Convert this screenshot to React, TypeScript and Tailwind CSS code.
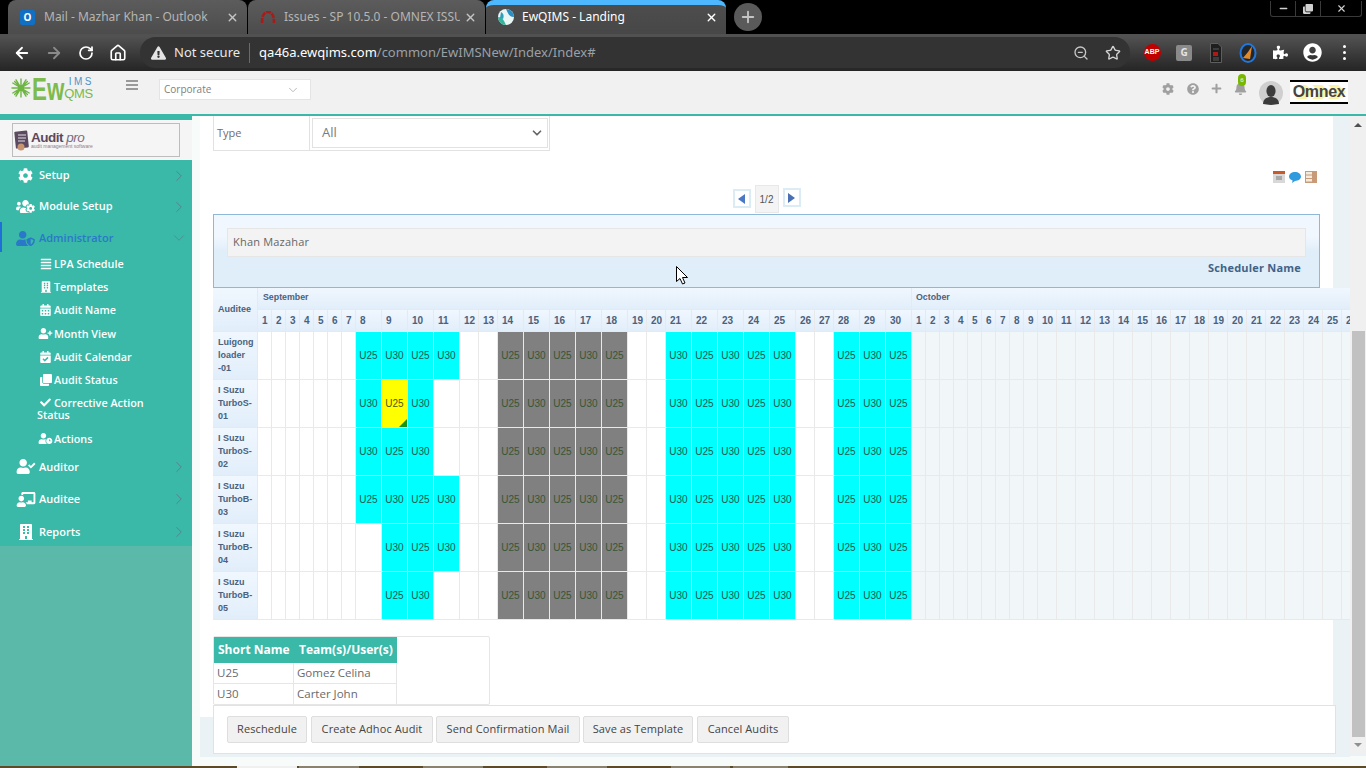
import type { ReactNode } from "react";
import { ArrowLeft, ArrowRight, ChevronDown, ChevronRight, Home, Minus, Plus, RotateCw, Star, X, ZoomOut } from "lucide-react";
import {
  FaAlignJustify,
  FaBell,
  FaBuilding,
  FaCalendarAlt,
  FaCalendarCheck,
  FaChalkboardTeacher,
  FaCheck,
  FaClone,
  FaCog,
  FaExclamationTriangle,
  FaPlus,
  FaPuzzlePiece,
  FaQuestionCircle,
  FaUserCheck,
  FaUserCircle,
  FaUserClock,
  FaUserPlus,
  FaUserShield,
  FaUsersCog,
} from "react-icons/fa";

const september = Array.from({ length: 30 }, (_, i) => i + 1);
const october = Array.from({ length: 26 }, (_, i) => i + 1);

const auditees = [
  { name: "Luigong loader -01", early: { 8: "U25", 9: "U30", 10: "U25", 11: "U30" } },
  { name: "I Suzu TurboS-01", early: { 8: "U30", 9: "U25", 10: "U30" } },
  { name: "I Suzu TurboS-02", early: { 8: "U30", 9: "U25", 10: "U30" } },
  { name: "I Suzu TurboB-03", early: { 8: "U25", 9: "U30", 10: "U25", 11: "U30" } },
  { name: "I Suzu TurboB-04", early: { 9: "U30", 10: "U25", 11: "U30" } },
  { name: "I Suzu TurboB-05", early: { 9: "U25", 10: "U30" } },
] as { name: string; early: Record<number, string> }[];

const grey: Record<number, string> = { 14: "U25", 15: "U30", 16: "U25", 17: "U30", 18: "U25" };
const cyan: Record<number, string> = {
  21: "U30",
  22: "U25",
  23: "U30",
  24: "U25",
  25: "U30",
  28: "U25",
  29: "U30",
  30: "U25",
};

function Tab({ icon, title, active, width }: { icon: ReactNode; title: string; active?: boolean; width: string }) {
  return (
    <div
      className={`flex h-[34px] items-center rounded-t-lg pl-[12px] pr-[8px] ${width} ${
        active
          ? "border-t-[5px] border-[#4db8ff] bg-linear-to-b from-[#4d4d4d] to-[#474747] pb-[5px] text-white"
          : "bg-linear-to-b from-[#5c5c5c] to-[#4c4c4c] text-[#b5b5b5]"
      }`}
    >
      <span className="flex w-[24px] shrink-0 items-center">{icon}</span>
      <span className="min-w-0 flex-1 overflow-hidden whitespace-nowrap text-[12px]">{title}</span>
      <X className={`ml-1 h-[13px] w-[13px] shrink-0 ${active ? "text-white" : "text-[#c4c4c4]"}`} strokeWidth={2.5} />
    </div>
  );
}

function BrowserChrome() {
  return (
    <div className="font-['Noto_Sans',sans-serif]">
      <div className="flex h-[34px] bg-black pl-[8px]">
        <Tab
          width="w-[239px]"
          title="Mail - Mazhar Khan - Outlook"
          icon={
            <span className="flex h-[15px] w-[15px] items-center justify-center rounded-[2px] bg-[#1170c4] text-[10px] font-bold leading-none text-white">
              O
            </span>
          }
        />
        <div className="w-px" />
        <Tab
          width="w-[237px]"
          title="Issues - SP 10.5.0 - OMNEX ISSUE"
          icon={
            <svg viewBox="0 0 16 12" className="h-[12px] w-[16px]">
              <path d="M2 12 C2 3 5 1 8 1 C11 1 14 3 14 12" fill="none" stroke="#a81b1b" strokeWidth="2.6" strokeDasharray="5 1" />
            </svg>
          }
        />
        <div className="w-px" />
        <Tab
          active
          width="w-[240px]"
          title="EwQIMS - Landing"
          icon={
            <svg viewBox="0 0 16 16" className="h-[16px] w-[16px]">
              <circle cx="8" cy="8" r="8" fill="#e8f6f4" />
              <path d="M8 0 A8 8 0 0 1 16 8 C11 8 10 4 8 0Z" fill="#2a8fc4" />
              <path d="M0 8 C5 8 6 12 8 16 A8 8 0 0 1 0 8Z" fill="#33b59a" />
              <path d="M3 3 C6 5 6 7 5 10 L2 9 Z" fill="#2f9ebd" />
            </svg>
          }
        />
        <div className="ml-[8px] mt-[3px] flex h-[28px] w-[28px] items-center justify-center rounded-full bg-[#5a5a5a]">
          <Plus className="h-[18px] w-[18px] text-[#c4c4c4]" strokeWidth={2.5} />
        </div>
        <div className="ml-auto mr-[4px] mt-px flex h-[16px] w-[92px] rounded-b-[3px] border border-t-0 border-[#3a3a3a] text-[#d0d0d0]">
          <div className="flex w-[25px] items-center justify-center border-r border-[#3a3a3a]">
            <Minus className="h-[11px] w-[11px]" strokeWidth={3} />
          </div>
          <div className="flex w-[25px] items-center justify-center border-r border-[#3a3a3a]">
            <FaClone className="h-[10px] w-[10px]" />
          </div>
          <div className="flex flex-1 items-center justify-center">
            <X className="h-[11px] w-[11px]" strokeWidth={2.5} />
          </div>
        </div>
      </div>
      <div className="flex h-[37px] items-center bg-linear-to-b from-[#515151] from-[8%] to-[#252525] pl-[6px]">
        <div className="flex w-[32px] justify-center">
          <ArrowLeft className="h-[18px] w-[18px] text-white" strokeWidth={2.4} />
        </div>
        <div className="flex w-[32px] justify-center">
          <ArrowRight className="h-[18px] w-[18px] text-[#8a8a8a]" strokeWidth={2.4} />
        </div>
        <div className="flex w-[32px] justify-center">
          <RotateCw className="h-[16px] w-[16px] text-white" strokeWidth={2.6} />
        </div>
        <div className="flex w-[32px] justify-center">
          <Home className="h-[18px] w-[18px] text-white" strokeWidth={2.2} />
        </div>
        <div className="ml-[6px] flex h-[31px] w-[990px] items-center rounded-full bg-[#333333] pl-[11px] pr-[9px]">
          <FaExclamationTriangle className="h-[14px] w-[15px] text-[#e4e4e4]" />
          <span className="ml-[8px] whitespace-nowrap text-[13px] text-[#e8e8e8]">Not secure</span>
          <span className="ml-[9px] h-[20px] w-px bg-[#6a6a6a]" />
          <span className="ml-[9px] whitespace-nowrap text-[13px] text-[#9aa0a6]">
            <span className="text-white">qa46a.ewqims.com</span>/common/EwIMSNew/Index/Index#
          </span>
          <ZoomOut className="ml-auto h-[16px] w-[16px] text-[#c8c8c8]" />
          <Star className="ml-[16px] h-[16px] w-[16px] text-[#d4d4d4]" strokeWidth={2} />
        </div>
        <div className="ml-[6px] flex w-[32px] justify-center">
          <span className="flex h-[17px] w-[17px] items-center justify-center rounded-full bg-[#c00000] font-['Liberation_Sans',sans-serif] text-[7px] font-bold text-white">
            ABP
          </span>
        </div>
        <div className="flex w-[32px] justify-center">
          <span className="flex h-[16px] w-[16px] items-center justify-center rounded-[2px] bg-[#8a8a8a] text-[10px] font-bold text-[#e5e5e5]">
            G
          </span>
        </div>
        <div className="flex w-[32px] justify-center">
          <svg viewBox="0 0 12 20" className="h-[20px] w-[12px]">
            <path d="M0.5 0.5H8L11.5 4V19.5H0.5Z" fill="#1e1e1e" stroke="#5e5e5e" />
            <rect x="3" y="9" width="5" height="4" fill="#b01818" />
            <path d="M3 6H9M3 15H9M3 17H9" stroke="#5a5a5a" />
          </svg>
        </div>
        <div className="flex w-[32px] justify-center">
          <svg viewBox="0 0 18 20" className="h-[20px] w-[18px]">
            <ellipse cx="9" cy="10" rx="7.5" ry="9" fill="#24262b" stroke="#2277dd" strokeWidth="2" />
            <path d="M13 3 L9 9 L4 15 L11 16 Z" fill="#e08a2c" />
          </svg>
        </div>
        <div className="flex w-[32px] justify-center">
          <FaPuzzlePiece className="h-[15px] w-[15px] text-white" />
        </div>
        <div className="flex w-[32px] justify-center">
          <FaUserCircle className="h-[19px] w-[19px] text-white" />
        </div>
        <div className="flex w-[32px] flex-col items-center gap-[3px]">
          <span className="h-[3px] w-[3px] rounded-full bg-white" />
          <span className="h-[3px] w-[3px] rounded-full bg-white" />
          <span className="h-[3px] w-[3px] rounded-full bg-white" />
        </div>
      </div>
    </div>
  );
}

function AppHeader() {
  return (
    <div className="flex h-[45px] items-center border-b-2 border-[#3ab8a8] bg-[#f1f1f1]">
      <svg viewBox="0 0 20 20" className="mb-[9px] ml-[11px] h-[20px] w-[20px]">
        <g stroke="#6fb544" strokeLinecap="round">
          <path d="M10 1V19M1 10H19M3.6 3.6L16.4 16.4M16.4 3.6L3.6 16.4M5 1.8L15 18.2M15 1.8L5 18.2M1.8 5L18.2 15M1.8 15L18.2 5" strokeWidth="1.4" />
        </g>
        <circle cx="10" cy="10" r="3" fill="#6fb544" />
      </svg>
      <span className="mb-[7px] ml-px w-[33px] origin-left scale-x-[0.72] font-['Liberation_Sans',sans-serif] text-[31px] font-bold leading-none text-[#7dbb4c]">
        Ew
      </span>
      <span className="mb-[8px] flex w-[28px] flex-col items-end font-['Liberation_Sans',sans-serif] leading-none">
        <span className="mr-[-1px] text-[10px] tracking-[2.5px] text-[#4c95c9]">IMS</span>
        <span className="text-[13px] tracking-[-0.3px] text-[#79b94a]">QMS</span>
      </span>
      <div className="mb-[15px] ml-[33px] flex w-[12px] flex-col gap-[2px]">
        <span className="h-[2px] bg-[#999999]" />
        <span className="h-[2px] bg-[#999999]" />
        <span className="h-[2px] bg-[#999999]" />
      </div>
      <div className="ml-[21px] mt-[-6px] flex h-[21px] w-[152px] items-center border border-[#e4e4e4] bg-white pl-[4px] pr-[10px] font-['Open_Sans',sans-serif] text-[10px] text-[#808080]">
        Corporate
        <ChevronDown className="ml-auto h-[14px] w-[14px] text-[#b0b0b0]" strokeWidth={1.5} />
      </div>
      <div className="ml-auto flex items-center text-[#a0a0a0]">
        <FaCog className="mb-[8px] h-[12px] w-[12px]" />
        <FaQuestionCircle className="mb-[8px] ml-[13px] h-[12px] w-[12px]" />
        <FaPlus className="mb-[8px] ml-[12px] h-[11px] w-[11px]" />
        <span className="relative mb-[8px] ml-[12px] block">
          <FaBell className="h-[13px] w-[13px]" />
          <span className="absolute left-[4px] top-[-8px] flex h-[12px] w-[8px] items-center justify-center rounded-full bg-[#7ab800] text-[6px] leading-none text-white">
            6
          </span>
        </span>
        <svg viewBox="0 0 24 24" className="ml-[12px] h-[24px] w-[24px]">
          <ellipse cx="12" cy="12" rx="12" ry="12" fill="#cfcfcf" />
          <ellipse cx="12" cy="10" rx="4.6" ry="6" fill="#3b3b3b" />
          <path d="M4 23 C4 17 9 16 12 16 C15 16 20 17 20 23 L12 24Z" fill="#3b3b3b" />
        </svg>
        <div className="relative mb-[2px] ml-[7px] mr-[18px] flex h-[24px] w-[58px] flex-col justify-between bg-white">
          <svg viewBox="0 0 58 24" className="absolute inset-0 h-[24px] w-[58px]">
            <path d="M6 5L14 12L6 19H16L24 12L16 5ZM22 5L30 12L22 19H32L40 12L32 5ZM38 5L46 12L38 19H48L56 12L48 5Z" fill="#fbf3a8" />
          </svg>
          <span className="relative h-[2px] bg-black" />
          <span className="relative text-center font-['Liberation_Sans',sans-serif] text-[16px] font-bold leading-none tracking-[-0.3px] text-[#444444]">
            Omnex
          </span>
          <span className="relative h-[2px] bg-black" />
        </div>
      </div>
    </div>
  );
}

function TopItem({ icon, label, open, blue, className }: { icon: ReactNode; label: string; open?: boolean; blue?: boolean; className: string }) {
  return (
    <div className={`flex items-center pr-[4px] ${blue ? "border-l-2 border-[#1f6fd6] text-[#2a78c8]" : "pl-[2px] text-white"} ${className}`}>
      <span className="flex w-[37px] shrink-0 justify-center pl-[10px]">{icon}</span>
      <span className="text-[11px] font-semibold">{label}</span>
      {open ? (
        <ChevronDown className="ml-auto h-[18px] w-[18px] text-[#4f8c96]" strokeWidth={1.2} />
      ) : (
        <ChevronRight className="ml-auto h-[18px] w-[18px] text-[#5a7f8f]" strokeWidth={1.2} />
      )}
    </div>
  );
}

function SubItem({ icon, label, className }: { icon: ReactNode; label: string; className: string }) {
  return (
    <div className={`pl-[37px] pr-[20px] text-[10.8px] font-semibold leading-[12px] text-white ${className}`}>
      <span className="inline-flex w-[17px] justify-center align-[-1px]">{icon}</span>
      {label}
    </div>
  );
}

function Sidebar() {
  return (
    <aside className="flex w-[192px] shrink-0 flex-col bg-[#5bb9a9] font-['Open_Sans',sans-serif]">
      <div className="bg-[#3ab8a8]">
        <div className="mt-[4px] h-[40px] bg-[#f5f5f5] pl-[12px] pr-[12px] pt-[3px]">
          <div className="flex h-[34px] items-center border border-[#bdbdbd] pl-px">
            <svg viewBox="0 0 16 22" className="h-[22px] w-[16px]">
              <rect x="1" y="2" width="13" height="17" rx="1" fill="#5b4a60" transform="rotate(-6 8 10)" />
              <path d="M4 6H12M4 9H12M4 12H11" stroke="#e5e0e5" strokeWidth="1" />
              <circle cx="7" cy="18" r="3.5" fill="#c7956f" />
            </svg>
            <div className="ml-px flex flex-col font-['Liberation_Sans',sans-serif] leading-none text-[#5a4860]">
              <span className="text-[13.5px] font-bold tracking-[-0.5px]">
                Audit <span className="font-normal italic text-[#7b6b80]">pro</span>
              </span>
              <span className="text-[5px] text-[#8a8090]">audit management software</span>
            </div>
          </div>
        </div>
        <TopItem className="h-[31px]" icon={<FaCog className="h-[15px] w-[15px]" />} label="Setup" />
        <TopItem className="h-[31px]" icon={<FaUsersCog className="h-[15px] w-[21px]" />} label="Module Setup" />
        <TopItem blue open className="h-[30px] pt-[2px]" icon={<FaUserShield className="h-[15px] w-[19px]" />} label="Administrator" />
        <SubItem className="flex h-[23.3px] items-center" icon={<FaAlignJustify className="h-[12px] w-[12px]" />} label="LPA Schedule" />
        <SubItem className="flex h-[23.3px] items-center" icon={<FaBuilding className="h-[12px] w-[10px]" />} label="Templates" />
        <SubItem className="flex h-[23.3px] items-center" icon={<FaCalendarAlt className="h-[12px] w-[11px]" />} label="Audit Name" />
        <SubItem className="flex h-[23.3px] items-center" icon={<FaUserPlus className="h-[11px] w-[15px]" />} label="Month View" />
        <SubItem className="flex h-[23.3px] items-center" icon={<FaCalendarCheck className="h-[12px] w-[11px]" />} label="Audit Calendar" />
        <SubItem className="flex h-[23.3px] items-center" icon={<FaClone className="h-[12px] w-[12px]" />} label="Audit Status" />
        <SubItem className="h-[35px] pt-[5px]" icon={<FaCheck className="h-[11px] w-[13px]" />} label="Corrective Action Status" />
        <SubItem className="flex h-[24px] items-center" icon={<FaUserClock className="h-[11px] w-[15px]" />} label="Actions" />
        <TopItem className="h-[32px]" icon={<FaUserCheck className="h-[15px] w-[20px]" />} label="Auditor" />
        <TopItem className="h-[33px]" icon={<FaChalkboardTeacher className="h-[15px] w-[20px]" />} label="Auditee" />
        <TopItem className="h-[30px] pt-[2px]" icon={<FaBuilding className="h-[16px] w-[14px]" />} label="Reports" />
      </div>
    </aside>
  );
}

function Cell({ label, fill, marked }: { label?: string; fill: string; marked?: boolean }) {
  return (
    <div className={`relative flex h-[48px] items-center justify-center border-b border-r border-[#e9e9e9] font-['Liberation_Sans',sans-serif] text-[10px] ${fill}`}>
      {label}
      {marked && (
        <svg viewBox="0 0 8 8" className="absolute bottom-0 right-0 h-[8px] w-[8px]">
          <path d="M8 0V8H0Z" fill="#159515" />
        </svg>
      )}
    </div>
  );
}

function ScheduleGrid() {
  const headBg = "bg-linear-to-b from-[#f0f7fe] to-[#e1eefa]";
  return (
    <div className="w-[1150px] overflow-hidden bg-white pl-[13px]">
      <div className="grid w-[1170px] grid-cols-[45px_repeat(7,14px)_repeat(4,26px)_repeat(2,19px)_repeat(5,26px)_repeat(2,19px)_repeat(5,26px)_repeat(2,19px)_repeat(3,26px)_repeat(9,14px)_repeat(17,19px)] font-['Liberation_Sans',sans-serif] text-[10px] font-bold text-[#4c617c]">
        <div className={`row-span-2 flex items-center border-b border-r border-[#e9e9e9] pl-[5px] text-[9px] ${headBg}`}>Auditee</div>
        <div className={`col-span-30 flex h-[22px] items-center border-b border-r border-[#e9e9e9] pb-[2px] pl-[5px] text-[8.8px] ${headBg}`}>September</div>
        <div className={`col-span-26 flex h-[22px] items-center border-b border-[#e9e9e9] pb-[2px] pl-[4px] text-[8.8px] ${headBg}`}>October</div>
        {september.concat(october).map((day, i) => (
          <div key={i} className={`flex h-[22px] items-center border-b border-r border-[#e9e9e9] pl-[4px] ${headBg}`}>
            {day}
          </div>
        ))}
        {auditees.map((row) => (
          <div key={row.name} className="contents">
            <div className={`flex h-[48px] items-center border-b border-r border-[#e9e9e9] pl-[5px] pr-[2px] text-[9px] leading-[12.7px] ${headBg}`}>
              {row.name}
            </div>
            {september.map((day) => {
              const key = `${row.name}-${day}`;
              if (row.early[day]) {
                const marked = row.name === "I Suzu TurboS-01" && day === 9;
                return (
                  <Cell
                    key={key}
                    label={row.early[day]}
                    marked={marked}
                    fill={marked ? "bg-[#ffff00] font-normal text-[#4f5a10]" : "bg-[#00ffff] font-normal text-[#1e5a50]"}
                  />
                );
              }
              if (grey[day]) return <Cell key={key} label={grey[day]} fill="bg-[#808080] font-normal text-[#3a5532]" />;
              if (cyan[day]) return <Cell key={key} label={cyan[day]} fill="bg-[#00ffff] font-normal text-[#1e5a50]" />;
              return <Cell key={key} fill="bg-white" />;
            })}
            {october.map((day) => (
              <Cell key={`${row.name}-oct-${day}`} fill="bg-[#f1f6f9]" />
            ))}
          </div>
        ))}
      </div>
    </div>
  );
}

function ActionButton({ label, width }: { label: string; width: string }) {
  return (
    <button className={`h-[27px] rounded-[2px] border border-[#dedede] bg-[#f1f1f1] text-center text-[11px] tracking-[0.1px] text-[#444444] ${width}`}>
      {label}
    </button>
  );
}

function Content() {
  return (
    <div className="relative min-w-0 flex-1 bg-[#f7fbfa] pl-[8px] font-['Open_Sans',sans-serif]">
      <div className="bg-[#eaf2f6]">
        <div className="mr-[17px] h-[172px] bg-white pl-[13px]">
          <div className="flex h-[35px] w-[337px] border-b border-l border-r border-[#e2e2e2]">
            <div className="flex w-[96px] items-center border-r border-[#e2e2e2] pl-[3px] text-[11px] text-[#6e6e6e]">Type</div>
            <div className="ml-[2px] mt-[2px] flex h-[30px] w-[236px] items-center border border-[#e2e2e2] pl-[9px] pr-[3px] text-[13px] text-[#7b7b7b]">
              All
              <ChevronDown className="ml-auto h-[14px] w-[14px] text-[#666666]" strokeWidth={3} />
            </div>
          </div>
          <div className="mr-[16px] mt-[20px] flex h-[14px] justify-end gap-[4px]">
            <svg viewBox="0 0 12 12" className="h-[12px] w-[12px]">
              <rect width="12" height="12" fill="#d8d8d8" />
              <rect width="12" height="3" fill="#c8592a" />
              <rect x="3" y="5" width="6" height="4" fill="#a8a8a8" />
            </svg>
            <svg viewBox="0 0 12 12" className="h-[12px] w-[12px]">
              <path d="M6 1C9.3 1 12 3 12 5.6C12 8.2 9.3 10 6 10L3 12L3.6 9.6C1.4 8.8 0 7.4 0 5.6C0 3 2.7 1 6 1Z" fill="#2f9bde" />
            </svg>
            <svg viewBox="0 0 12 12" className="h-[12px] w-[12px]">
              <rect width="12" height="12" fill="#c89a78" />
              <rect x="1" y="1" width="6" height="2.5" fill="#f4ebdf" />
              <rect x="1" y="4.5" width="6" height="2.5" fill="#f4ebdf" />
              <rect x="1" y="8" width="6" height="2.5" fill="#f4ebdf" />
            </svg>
          </div>
          <div className="mr-[13px] flex h-[28px] items-start justify-center gap-[4px]">
            <div className="mt-[4px] flex h-[19px] w-[18px] items-center justify-center border-2 border-[#dcecf5] bg-white">
              <span className="h-0 w-0 border-y-[5px] border-r-[7px] border-y-transparent border-r-[#4a78c4]" />
            </div>
            <div className="flex h-[28px] w-[24px] items-center justify-center border border-[#e8e8e8] bg-[#f4f4f4] font-['Liberation_Sans',sans-serif] text-[10px] text-[#555555]">
              1/2
            </div>
            <div className="mt-[3px] flex h-[19px] w-[18px] items-center justify-center border-2 border-[#dcecf5] bg-white">
              <span className="h-0 w-0 border-y-[5px] border-l-[7px] border-y-transparent border-l-[#4a6fb4]" />
            </div>
          </div>
          <div className="mr-[13px] mt-px h-[74px] border border-[#8fb8d8] bg-linear-to-b from-[#f0f7fe] from-30% to-[#e0eefa] to-50% pl-[13px] pr-[13px] pt-[13px]">
            <div className="flex h-[29px] items-center border border-[#e6e6e6] bg-[#f3f3f3] pl-[5px] text-[11px] tracking-[0.2px] text-[#666666]">
              Khan Mazahar
            </div>
            <div className="mr-[5px] mt-[3px] text-right text-[11px] font-bold tracking-[0.2px] text-[#3f6387]">Scheduler Name</div>
          </div>
        </div>
        <ScheduleGrid />
        <div className="mr-[17px] h-[85px] bg-white pl-[13px] pt-[16px]">
          <div className="h-[69px] w-[277px] rounded-[2px] border border-[#e6e6e6]">
            <div className="grid w-[183px] grid-cols-[80px_103px] border-r border-[#e6e6e6] text-[11.5px] text-[#6a6a6a]">
              <div className="flex h-[26px] items-center bg-[#3ab8a8] pl-[4px] text-[12px] font-bold text-white">Short Name</div>
              <div className="flex h-[26px] items-center whitespace-nowrap bg-[#3ab8a8] pl-[5px] text-[12px] font-bold text-white">Team(s)/User(s)</div>
              <div className="flex h-[21px] items-center border-b border-r border-[#e6e6e6] pl-[3px]">U25</div>
              <div className="flex h-[21px] items-center border-b border-[#e6e6e6] pl-[3px]">Gomez Celina</div>
              <div className="flex h-[20px] items-center border-r border-[#e6e6e6] pl-[3px]">U30</div>
              <div className="flex h-[20px] items-center pl-[3px]">Carter John</div>
            </div>
          </div>
        </div>
        <div className="flex">
          <div className="h-[12px] w-[13px] bg-white" />
          <div className="mb-[3px] flex h-[49px] w-[1123px] items-center gap-[3px] border border-[#e2e2e2] bg-white pl-[13px]">
            <ActionButton label="Reschedule" width="w-[80px]" />
            <ActionButton label="Create Adhoc Audit" width="ml-px w-[122px]" />
            <ActionButton label="Send Confirmation Mail" width="w-[144px]" />
            <ActionButton label="Save as Template" width="w-[110px]" />
            <ActionButton label="Cancel Audits" width="ml-px w-[92px]" />
          </div>
        </div>
      </div>
    </div>
  );
}

function Scrollbar() {
  return (
    <div className="flex w-[16px] shrink-0 flex-col bg-[#f7fbfa]">
      <div className="flex h-[637px] flex-col items-center bg-[#f0f0f0]">
        <span className="mt-[7px] h-0 w-0 border-x-[4px] border-b-[4px] border-x-transparent border-b-[#505050]" />
        <div className="mt-[204px] h-[406px] w-[13px] bg-[#c1c1c1]" />
        <span className="mt-[6px] h-0 w-0 border-x-[4px] border-t-[4px] border-x-transparent border-t-[#909090]" />
      </div>
      <div className="h-[3px] bg-[#eaf2f6]" />
    </div>
  );
}

export default function App() {
  return (
    <div className="relative flex h-[768px] w-[1366px] flex-col overflow-hidden bg-white">
      <BrowserChrome />
      <AppHeader />
      <div className="flex min-h-0 flex-1">
        <Sidebar />
        <Content />
        <Scrollbar />
      </div>
      <div className="flex h-[2px] bg-[#5c4a28]">
        <span className="ml-[237px] w-[60px] bg-[#f0f0f0]" />
        <span className="ml-[2px] w-[60px] bg-[#8a8270]" />
        <span className="ml-[64px] w-[60px] bg-[#8a8270]" />
        <span className="ml-[64px] w-[60px] bg-[#8a8270]" />
        <span className="ml-[64px] w-[59px] bg-[#8a8270]" />
        <span className="ml-[3px] w-[55px] bg-[#8a8270]" />
      </div>
      <svg viewBox="0 0 12 19" className="absolute left-[676px] top-[266px] h-[19px] w-[12px]">
        <path d="M0.5 0.5V15.5L4 12.5L6.5 18L9 17L6.5 11.5H11.5Z" fill="white" stroke="black" strokeWidth="1" />
      </svg>
    </div>
  );
}
